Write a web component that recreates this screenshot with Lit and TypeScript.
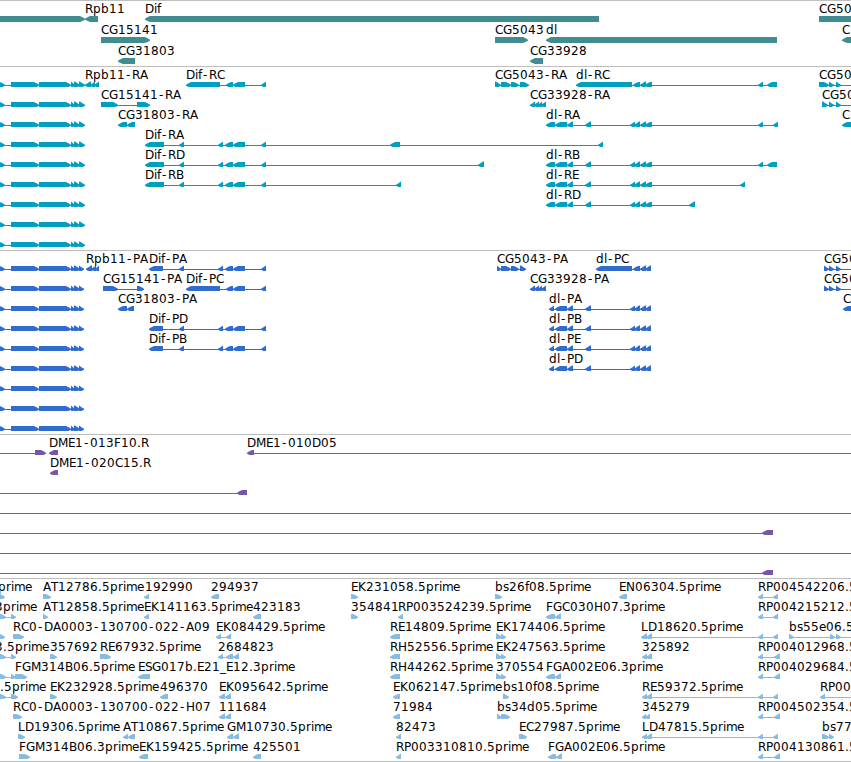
import { css, html, LitElement, svg } from 'lit';
import { customElement, property } from 'lit/decorators.js';

type Span = [number, number];

interface Feature {
  label?: string;
  // label position, defaults to the start of the first block
  at?: number;
  // label is right aligned to this position
  end?: number;
  dir: '<' | '>';
  blocks: Span[];
  // connecting line, defaults to the extent of the blocks
  line?: Span;
}

interface Track {
  name: string;
  rows: Feature[][];
}

const WIDTH = 851;
const HEAD = 5;

// whole pixel advances, so labels keep the same spacing at every position
const ADVANCES: Record<string, number> = {
  '-': 7, '.': 4, _: 6, A: 8, B: 8, C: 8, D: 9, E: 7, F: 7, G: 9, H: 9, K: 8, L: 7,
  M: 10, N: 9, P: 7, R: 8, S: 7, T: 7, b: 8, d: 8, e: 7, f: 4, i: 3, l: 3, m: 11,
  p: 8, r: 5, s: 6,
};

const advance = (c: string) => ADVANCES[c] ?? 8;

const left = (label: string, blocks: Span[], extra: Partial<Feature> = {}): Feature => ({
  label, dir: '<', blocks, ...extra,
});

const right = (label: string, blocks: Span[], extra: Partial<Feature> = {}): Feature => ({
  label, dir: '>', blocks, ...extra,
});

const head = (end: number): Feature =>
  right('', [[-6, 5], [11, 39], [39, 71], [71, 75], [74, 80], [79, end]]);

const difMiddle: Span[] = [[179, 184], [218, 223], [225, 233], [233, 245], [261, 266]];
const difShort: Span[] = [[186, 220], [226, 233], [233, 245], [261, 266]];
const dlMiddle: Span[] = [[555, 567], [567, 573], [585, 591], [630, 635], [634, 640], [640, 646]];
const dlTranscript: Span[] = [[546, 555], ...dlMiddle, [645, 652]];
const dlProtein: Span[] = [[549, 554], ...dlMiddle, [645, 651]];
const rp: Span[] = [[758, 763], [773, 778]];
const rpLong: Span[] = [[758, 763], [774, 780]];
const ldLong: Span[] = [[641, 647], [646, 652], ...rp];

const genes: Feature[][] = [
  [
    right('', [[-10, 85]]),
    left('Rpb11', [[85, 98]]),
    left('Dif', [[145, 599]]),
    right('CG50', [[819, 870]]),
  ],
  [
    right('CG15141', [[101, 150]]),
    right('CG5043', [[495, 528]]),
    left('dl', [[546, 777]]),
    left('C', [[842, 870]]),
  ],
  [left('CG31803', [[118, 135]]), left('CG33928', [[530, 543]])],
];

const transcripts: Feature[][] = [
  [
    left('Rpb11-RA', [[85, 91], [90, 95], [94, 99]]),
    left('Dif-RC', difShort),
    right('CG5043-RA', [[495, 501], [501, 511], [511, 519], [520, 529]]),
    left('dl-RC', [[576, 632], [633, 640], [640, 646], [645, 652], [758, 763], [767, 777]]),
    right('CG50', [[819, 829], [829, 834], [836, 841]], { line: [819, 860] }),
  ],
  [
    right('CG15141-RA', [[101, 118], [137, 150]]),
    left('CG33928-RA', [[530, 535], [534, 539], [538, 542], [541, 546]]),
    right('CG50', [[822, 828], [829, 834], [836, 841]], { line: [822, 860] }),
  ],
  [
    left('CG31803-RA', [[118, 127], [127, 135]]),
    left('dl-RA', [...dlTranscript, [758, 763], [773, 778]]),
    left('C', [[842, 870]]),
  ],
  [left('Dif-RA', [[145, 164], ...difMiddle, [390, 400], [598, 603]])],
  [
    left('Dif-RD', [[145, 164], ...difMiddle, [478, 484]]),
    left('dl-RB', [...dlTranscript, [758, 763], [767, 777]]),
  ],
  [
    left('Dif-RB', [[145, 164], ...difMiddle, [396, 401]]),
    left('dl-RE', [...dlTranscript, [740, 745]]),
  ],
  [left('dl-RD', [...dlTranscript, [689, 695]])],
  [],
  [],
];

const proteins: Feature[][] = [
  [
    left('Rpb11-PA', [[86, 92], [91, 96], [95, 99]]),
    left('Dif-PA', [[149, 163], ...difMiddle]),
    right('CG5043-PA', [[497, 501], [501, 511], [511, 519], [520, 526]]),
    left('dl-PC', [[596, 632], [633, 640], [640, 646], [645, 651]]),
    right('CG50', [[824, 829], [829, 834], [836, 841]], { line: [824, 860] }),
  ],
  [
    right('CG15141-PA', [[103, 118], [137, 144]]),
    left('Dif-PC', difShort),
    left('CG33928-PA', [[530, 535], [534, 539], [538, 542], [541, 546]]),
    right('CG50', [[824, 829], [829, 834], [836, 841]], { line: [824, 860] }),
  ],
  [
    left('CG31803-PA', [[118, 127], [127, 134]]),
    left('dl-PA', dlProtein),
    left('C', [[843, 870]]),
  ],
  [left('Dif-PD', [[149, 163], ...difMiddle]), left('dl-PB', dlProtein)],
  [left('Dif-PB', [[149, 163], ...difMiddle]), left('dl-PE', dlProtein)],
  [left('dl-PD', dlProtein)],
  [],
  [],
  [],
];

const clones: Feature[][] = [
  [
    right('', [[35, 46]], { line: [0, 35] }),
    left('DME1-013F10.R', [[49, 58]]),
    left('DME1-010D05', [[247, 254]], { line: [254, WIDTH] }),
  ],
  [left('DME1-020C15.R', [[50, 58]])],
  [left('', [[237, 247]], { line: [0, 237] })],
  [left('', [], { line: [0, WIDTH] })],
  [left('', [[762, 773]], { line: [0, 762] })],
  [left('', [], { line: [0, WIDTH] })],
  [left('', [[762, 773]], { line: [0, 762] })],
];

const ests: Feature[][] = [
  [
    right('prime', [[-3, 5]], { end: 32 }),
    right('AT12786.5prime', [[43, 51]]),
    left('192990', [[144, 149]], { at: 145 }),
    left('294937', [[211, 219]]),
    right('EK231058.5prime', [[351, 358]]),
    right('bs26f08.5prime', [[495, 502]]),
    left('EN06304.5prime', [[619, 627]]),
    left('RP004542206.5', rp),
  ],
  [
    right('3prime', [[-2, 6], [11, 16]], { end: 37 }),
    right('AT12858.5prime', [[43, 48]]),
    left('EK141163.5prime', [[144, 149]]),
    left('423183', [[253, 261]]),
    right('354841', [[351, 358]]),
    left('RP003524239.5prime', [[398, 403]]),
    left('FGC030H07.3prime', [[546, 555], [555, 561]]),
    left('RP004215212.5', rp),
  ],
  [
    right('', [[-3, 5]]),
    right('RC0-DA0003-130700-022-A09', [[13, 24]]),
    left('EK084429.5prime', [[216, 221], [226, 231]]),
    left('RE14809.5prime', [[390, 400]]),
    right('EK174406.5prime', [[496, 502], [501, 506]]),
    left('LD18620.5prime', ldLong),
    right('bs55e06.5', [[789, 794], [830, 835], [836, 841]], { line: [789, 860] }),
  ],
  [
    right('3.5prime', [[-2, 6], [11, 16]], { end: 49 }),
    right('357692', [[50, 57]]),
    right('RE67932.5prime', [[100, 111]]),
    left('2684823', [[218, 223], [226, 233], [233, 239]]),
    left('RH52556.5prime', [[390, 400]]),
    right('EK247563.5prime', [[496, 502], [501, 506]]),
    left('325892', [[642, 647], [646, 652]]),
    left('RP004012968.5', rpLong),
  ],
  [
    right('', [[-2, 6], [11, 16]]),
    right('FGM314B06.5prime', [[15, 27]]),
    left('ESG017b.E21_E12.3prime', [[138, 150]]),
    left('RH44262.5prime', [[390, 400]]),
    right('370554', [[496, 502], [501, 506]]),
    left('FGA002E06.3prime', [[546, 555], [555, 561]]),
    left('RP004029684.5', rpLong),
  ],
  [
    right('.5prime', [[-2, 6], [11, 18]], { end: 46 }),
    right('EK232928.5prime', [[50, 57]]),
    left('496370', [[160, 168]]),
    left('EK095642.5prime', [[219, 225], [225, 231]]),
    left('EK062147.5prime', [[393, 400]]),
    right('bs10f08.5prime', [[503, 509]]),
    left('RE59372.5prime', [[642, 647], ...ldLong.slice(1)]),
    left('RP00', [[820, 825]], { line: [820, 860] }),
  ],
  [
    right('RC0-DA0003-130700-022-H07', [[13, 22]]),
    left('111684', [[219, 225], [225, 231]]),
    left('71984', [[393, 400]]),
    right('bs34d05.5prime', [[497, 502], [501, 510]]),
    left('345279', [[642, 646], [645, 650]]),
    left('RP004502354.5', rpLong),
  ],
  [
    right('LD19306.5prime', [[18, 25]]),
    left('AT10867.5prime', [[123, 128], [128, 135]]),
    left('GM10730.5prime', [[227, 233], [233, 239]]),
    left('82473', [[396, 401]]),
    right('EC27987.5prime', [[519, 527]]),
    left('LD47815.5prime', [[642, 647], ...ldLong.slice(1)]),
    right('bs77', [[822, 829], [829, 834]]),
  ],
  [
    right('FGM314B06.3prime', [[19, 30]]),
    left('EK159425.5prime', [[139, 148]]),
    left('425501', [[253, 261]]),
    left('RP003310810.5prime', [[396, 401]]),
    left('FGA002E06.5prime', [[548, 556], [556, 562]]),
    left('RP004130861.5', rpLong),
  ],
];

const tracks: Track[] = [
  { name: 'genes', rows: genes },
  { name: 'transcripts', rows: transcripts.map((row) => [head(85), ...row]) },
  { name: 'proteins', rows: proteins.map((row) => [head(84), ...row]) },
  { name: 'clones', rows: clones },
  { name: 'ests', rows: ests },
];

@customElement('track-row')
export class TrackRow extends LitElement {
  @property({ attribute: false }) features: Feature[] = [];

  static get styles() {
    return css`
      :host {
        display: block;
        overflow: hidden;
      }

      svg {
        display: block;
        width: 851px;
        height: 100%;
      }

      text {
        font: 12px 'DejaVu Sans', sans-serif;
        fill: #000;
        white-space: pre;
      }

      .block,
      .line {
        fill: var(--track-color);
      }
    `;
  }

  renderBlock([x0, x1]: Span, dir: string) {
    const size = Math.min(HEAD, x1 - x0);
    const [tip, tail, step] = dir === '<' ? [x0, x1, size] : [x1, x0, -size];
    const shoulder = tip + step * 0.5;
    // short blocks are plain triangles, slightly taller at the base
    const grow = Math.abs(x1 - x0) <= 6 ? 0.4 : 0;
    const points = [
      [tip, 17.7],
      [shoulder, 16.2],
      [tip + step, 15 - grow],
      [tail, 15 - grow],
      [tail, 21 + grow],
      [tip + step, 21 + grow],
      [shoulder, 19.9],
      [tip, 18.7],
    ];
    return svg`<polygon class="block" points=${points.join(' ')} />`;
  }

  renderLabel(feature: Feature) {
    if (!feature.label) return '';
    const chars = [...feature.label];
    const total = chars.reduce((sum, c) => sum + advance(c), 0);
    let x = feature.end !== undefined ? feature.end - total : feature.at ?? feature.blocks[0][0];
    const xs = chars.map((c) => {
      // hyphens are centred in their wider cell
      const pos = c === '-' ? x + 1 : x;
      x += advance(c);
      return pos;
    });
    return svg`<text x=${xs.join(' ')} y="12">${feature.label}</text>`;
  }

  renderFeature(feature: Feature) {
    const { blocks } = feature;
    const [from, to] = feature.line ?? [blocks[0][0], blocks[blocks.length - 1][1]];
    const hasLine = feature.line || blocks.length > 1;
    return svg`
      ${hasLine ? svg`<rect class="line" x=${from} y="18" width=${to - from} height="1" />` : ''}
      ${blocks.map((block) => this.renderBlock(block, feature.dir))}
      ${this.renderLabel(feature)}
    `;
  }

  render() {
    return html`<svg>${this.features.map((feature) => this.renderFeature(feature))}</svg>`;
  }
}

@customElement('app-root')
export class AppRoot extends LitElement {
  static get styles() {
    return css`
      :host {
        display: flex;
        flex-direction: column;
        box-sizing: border-box;
        width: 851px;
        height: 762px;
        overflow: hidden;
        background: #fff;
        border-bottom: 1px solid #bebebe;
      }

      .track {
        display: grid;
        grid-auto-rows: 20px;
        flex: none;
        padding-bottom: 3px;
        border-top: 1px solid #bebebe;
      }

      .genes {
        --track-color: #408c91;
        grid-auto-rows: 21px;
        padding-bottom: 2px;
      }

      .transcripts {
        --track-color: #009fc0;
      }

      .proteins {
        --track-color: #306bce;
      }

      .clones {
        --track-color: #7858a6;
      }

      .ests {
        --track-color: #88bbdd;
        padding-bottom: 2px;
      }
    `;
  }

  render() {
    return html`
      ${tracks.map(
        (track) => html`
          <section class="track ${track.name}">
            ${track.rows.map((row) => html`<track-row .features=${row}></track-row>`)}
          </section>
        `
      )}
    `;
  }
}
